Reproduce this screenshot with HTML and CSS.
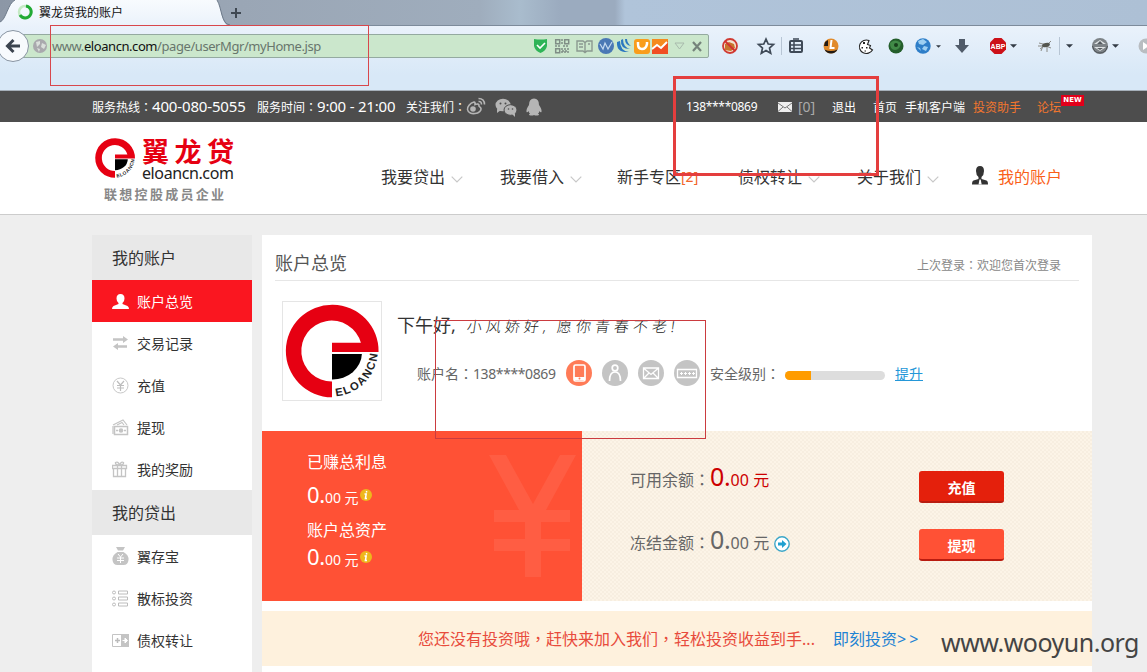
FILE: index.html
```html
<!DOCTYPE html>
<html lang="zh-CN">
<head>
<meta charset="utf-8">
<title>翼龙贷我的账户</title>
<link rel="stylesheet" href="styles.css">
</head>
<body>
<svg class="defs" width="0" height="0">
  <defs>
    <symbol id="logo" viewBox="0 0 100 100">
      <path fill="#e60012" d="M50 97.3A47.3 47.3 0 1 1 97.5 51H50V41.5H79.5A31 31 0 1 0 50 81Z"/>
      <path fill="#000" d="M50 53H80.5A30 27 0 0 1 50 79Z"/>
      <path id="arc" fill="none" d="M50 96.5A46.5 46.5 0 0 0 96.5 50"/>
      <text class="arc-text" textLength="66"><textPath href="#arc" startOffset="4">ELOANCN</textPath></text>
    </symbol>
    <symbol id="envelope" viewBox="0 0 14 10"><path fill="#eee" d="M0 0h14v10H0z"/><path fill="none" stroke="#777" d="M0 1l7 5 7-5M0 9.500l5-4.500M14 9.500L9 5"/></symbol>
    <symbol id="info" viewBox="0 0 12 12"><circle cx="6" cy="6" r="6" fill="#eeb71c"/><path d="M6.700 2l-.3 1.500M4.500 5h1.700l-.8 4.500h1.600" stroke="#fff" stroke-width="1.500" fill="none"/></symbol>
    <symbol id="caret" viewBox="0 0 8 4"><path d="M0 0h8L4 4z" fill="#333b45"/></symbol>
    <symbol id="chev" viewBox="0 0 12 7"><path d="M.7.700L6 6 11.300.700" fill="none" stroke="#c8c8c8" stroke-width="1.200"/></symbol>
  </defs>
</svg>

<div class="browser">
  <div class="tabs">
    <svg class="tab-shape" width="230" height="26"><defs><linearGradient id="tg" x2="0" y2="1"><stop stop-color="#f8fbfe"/><stop offset="1" stop-color="#eaf2fb"/></linearGradient></defs><path d="M0 26V22C6 20 8 3 15 0H217C222 8 221 25 230 26Z" fill="url(#tg)"/><path d="M0 22C6 20 8 3 15 0M217 0C222 8 221 24 230 25" fill="none" stroke="#6d7a8a"/></svg>
    <svg class="spinner" width="16" height="16"><circle cx="8" cy="8" r="6" fill="none" stroke="#c5eac5" stroke-width="2.500"/><path d="M9 2A6 6 0 1 1 3 11" fill="none" stroke="#22aa35" stroke-width="3"/></svg>
    <span class="tab-title">翼龙贷我的账户</span>
    <svg class="plus" width="12" height="12"><path d="M6 1v10M1 6h10" stroke="#3f4852" stroke-width="2"/></svg>
  </div>
  <div class="toolbar">
    <svg class="back" width="32" height="34" viewBox="-3 0 32 34"><circle cx="13" cy="17" r="15.500" fill="#f7fafd" stroke="#8894a2"/><path d="M20 17H9M13.500 11l-6 6 6 6" fill="none" stroke="#3b444f" stroke-width="3"/></svg>
    <div class="url">
      <svg class="globe" width="14" height="14"><circle cx="7" cy="7" r="7" fill="#a9a9ad"/><path d="M3 3l4-1 0 3-3 3zM9 4l4 2-2 4-3-2zM4 9l3 1-1 3z" fill="#dadfdb"/></svg>
      <span class="address">www.<b>eloancn.com</b>/page/userMgr/myHome.jsp</span>
      <svg class="url-icons" width="172" height="18">
        <path d="M1 2Q8 3 14 2V9Q13 14 7.500 16 2 14 1 9Z" fill="#2fb457"/><path d="M4 8l3 3 5-5" fill="none" stroke="#fff" stroke-width="1.600"/>
        <g fill="none" stroke="#7f8d85" stroke-width="1.500"><path d="M22.700 2.700h4v4h-4zM31.700 2.700h4v4h-4zM22.700 11.700h4v4h-4z"/><path d="M29 2v6M22 9h5M30 9h6M29 11v5M32 11v5M35 11v5M29 14h6" stroke-dasharray="2 1"/></g>
        <path d="M44 4h6l2 1.500 2-1.500h5v10h-5l-2 1.500-2-1.500h-6zM52 5v10M46 7h4M46 10h4M55 7h2" fill="none" stroke="#8b9990" stroke-width="1.400"/>
        <circle cx="73" cy="9" r="8" fill="#4a78b5"/><path d="M67 7l3 5 2-6 3 6 4-7" fill="none" stroke="#c5daf0" stroke-width="1.200"/>
        <path d="M84 5q-1 11 12 10-9-1-9-11M88 3q-1 9 9 9-7-2-7-10M92 2q0 6 6 7-4-3-4-7" fill="#2c78c0"/>
        <rect x="101" y="2" width="16" height="15" rx="3" fill="#f99d1c"/><path d="M105 5v2q0 5 4 5t5-5V5" fill="none" stroke="#fff" stroke-width="2.500"/>
        <path d="M119 2h16v15h-16z" fill="#f58a1f"/><path d="M119 12l5-4 4 3 7-7v13h-16z" fill="#f04e23"/><path d="M119 12l5-4 4 3 6-6" fill="none" stroke="#fff" stroke-width="2"/>
        <path d="M142 6h9l-4.500 6z" fill="none" stroke="#a8baac"/>
        <path d="M160 5l8 9M168 5l-8 9" stroke="#75837b" stroke-width="2.200"/>
      </svg>
    </div>
    <svg class="tools" width="431" height="24">
      <g transform="translate(-716 -34)">
        <circle cx="730" cy="46" r="7" fill="#f3e2d2" stroke="#d03a32" stroke-width="1.800"/><path d="M725 44l4-2 5 2 1 4-4 3-6-1z" fill="#c8742c"/><path d="M725 41l10 10" stroke="#d22f2f" stroke-width="1.800"/>
        <path d="M766 39l2.200 5 5.300.5-4 3.600 1.200 5.200-4.700-2.800-4.700 2.800 1.200-5.200-4-3.600 5.300-.5z" fill="none" stroke="#3f4a57" stroke-width="1.700"/>
        <path d="M781.500 37v18" stroke="#b7c5d4"/>
        <rect x="790" y="41" width="12" height="11" rx="1" fill="none" stroke="#3f4a57" stroke-width="2"/><path d="M793 39h6M790 45h12M790 48.500h12M794 42v10" stroke="#3f4a57" stroke-width="1.500"/>
        <circle cx="831" cy="46" r="7.500" fill="#e18b2c"/><path d="M824.500 49.500q6.500 3 13 0-2 4-6.500 4t-6.500-4zM825 42l3-2v6h-4z" fill="#221b15"/><path d="M831.500 40l-1 8h4" fill="none" stroke="#fff" stroke-width="2"/>
        <path d="M869 40.500a7 6.700 0 1 0 3.500 9.500l-3-2 1-2.500-3-1z" fill="#fff" stroke="#222" stroke-width="1.100"/><path d="M863 42h2v2h-2zM866 47h1.500v1.500h-1.500zM861.500 47h1.500v1.500h-1.500zM864.500 50.500h1.500v1h-1.500z" fill="#222"/>
        <circle cx="896" cy="46" r="7.500" fill="#245e2b"/><path d="M890 43q5-5 11 0-1 7-6 7t-5-7z" fill="#418a47"/><circle cx="896" cy="45" r="2" fill="#183f1c"/>
        <circle cx="923" cy="46" r="7.700" fill="#2e7ec8"/><path d="M918 41l5-2 4 3-4 3-4-1zM924 46l4 1-2 4-4-2zM917 47l3 1 1 3z" fill="#9dcff2"/>
        <use href="#caret" x="936" y="45" width="5" height="3"/>
        <path d="M959 39h6v6h4l-7 8-7-8h4z" fill="#505b69"/>
        <path d="M994.500 38h7l4.500 4.500v7l-4.500 4.500h-7l-4.500-4.500v-7z" fill="#cc1018"/><text x="998" y="49" class="abp">ABP</text>
        <use href="#caret" x="1010" y="44" width="7" height="4"/>
        <path d="M1039 43l8 2 4-4M1038 46h8l5 2M1043 46l-2 5M1047 46l0 6M1040 49l4-3" stroke="#8b8b86" fill="none"/><ellipse cx="1046" cy="45" rx="4" ry="2" fill="#55564f" transform="rotate(-15 1046 45)"/>
        <path d="M1059.500 37v18" stroke="#b7c5d4"/><use href="#caret" x="1066" y="44" width="7" height="4"/>
        <circle cx="1100" cy="46" r="8" fill="#7d8387"/><path d="M1094 44l6-4 6 4zM1094 47h12l-6 4z" fill="#dfe3e5"/><path d="M1097 44l3-3 3 3zM1097 48h6l-3 2z" fill="#555b60"/><path d="M1092.500 46q1.500 7 7.500 7t7.500-7" fill="none" stroke="#4c5257"/>
        <use href="#caret" x="1112" y="44" width="7" height="4"/>
        <circle cx="1146" cy="46" r="7.500" fill="#b9bdc1"/><path d="M1143 42v8l6-4z" fill="#fff"/>
      </g>
    </svg>
  </div>
</div>

<div class="topbar">
  <span class="hot">服务热线<i class="fw" lang="zh-TW">：</i></span><span class="hot-no">400-080-5055</span>
  <span class="hours">服务时间<i class="fw" lang="zh-TW">：</i></span><span class="hours-no">9:00 - 21:00</span>
  <span class="follow">关注我们<i class="fw" lang="zh-TW">：</i></span>
  <svg class="social" width="78" height="20">
    <g fill="none" stroke="#b5b5b5" stroke-width="1.600"><path d="M8 5C4 6 1 10 1.500 12.500 2 16 6 17 9 16.500c4-.5 6.500-3 6-5-.4-1.700-2-1.500-2-2.500.3-2-1.500-2.500-4-1.500C9 6 9.200 4.800 8 5z"/><path d="M12.500 4.500q3-.5 3 3M12.500 1.500q6 0 6 6"/></g><circle cx="7" cy="12" r="2.800" fill="#b5b5b5"/>
    <g fill="#b5b5b5"><ellipse cx="37" cy="8" rx="7.500" ry="6.300"/><path d="M31 12l0 4 4-3z"/><ellipse cx="44.500" cy="13" rx="6.500" ry="5.300" stroke="#4d4d4d"/><path d="M46 17l3 3v-4z"/></g><g fill="#4d4d4d"><circle cx="34.500" cy="6.500" r="1"/><circle cx="39.500" cy="6.500" r="1"/><circle cx="42.500" cy="12" r=".8"/><circle cx="46.500" cy="12" r=".8"/></g>
    <path d="M68 1.500q5 0 5 6.500 3 4 2.500 7-1 1-2-1-.5 2-1.500 2.500 1.500 1 1 1.500-3 1-5 0-2 1-5 0-.5-.5 1-1.500-1-.5-1.500-2.500-1 2-2 1Q60 12 63 8q0-6.500 5-6.500z" fill="#b5b5b5"/>
  </svg>
  <span class="phone">138****0869</span>
  <svg class="mail" width="14" height="10"><use href="#envelope"/></svg>
  <span class="count">[0]</span>
  <span class="logout">退出</span><span class="home">首页</span><span class="mobile">手机客户端</span>
  <span class="helper">投资助手</span><span class="forum">论坛<b class="new">NEW</b></span>
</div>

<header class="header">
  <div class="brand">
    <div class="brand-row"><svg width="42" height="42"><use href="#logo"/></svg>
      <div class="brand-words"><b>翼龙贷</b><span>eloancn.com</span></div></div>
    <div class="slogan">联想控股成员企业</div>
  </div>
  <nav class="nav">
    <span class="n1">我要贷出<svg width="12" height="7"><use href="#chev"/></svg></span>
    <span class="n2">我要借入<svg width="12" height="7"><use href="#chev"/></svg></span>
    <span class="n3">新手专区<em>[2]</em></span>
    <span class="n4">债权转让<svg width="12" height="7"><use href="#chev"/></svg></span>
    <span class="n5">关于我们<svg width="12" height="7"><use href="#chev"/></svg></span>
    <span class="n6"><svg class="user" width="16" height="19"><path d="M8 0q4 0 4 5 0 4-2.500 6v2l5 1.500q1.500.5 1.500 4H0q0-3.500 1.500-4l5-1.500v-2Q4 9 4 5q0-5 4-5z" fill="#333"/><path d="M7.500 13.500h1.200l1 5H6.500z" fill="#fff"/></svg>我的账户</span>
  </nav>
</header>

<div class="page">
  <aside class="side">
    <h3>我的账户</h3>
    <a class="on"><svg width="17" height="17"><path d="M8.500 1q4 0 4 4.500 0 3-2 4.500v1l5 2q1.500 1 1.500 3H0q0-2 1.500-3l5-2v-1q-2-1.500-2-4.500 0-4.500 4-4.500z" fill="#fff"/></svg><span>账户总览</span></a>
    <a><svg width="17" height="17"><path d="M1 4.500h10M6 11.500h9" stroke="#c4c4c4" stroke-width="2.600"/><path d="M11 1l5 3.500-5 3.500zM6 8l-5 3.500L6 15z" fill="#c4c4c4"/></svg><span>交易记录</span></a>
    <a><svg width="17" height="17"><circle cx="8.500" cy="8.500" r="7.500" fill="none" stroke="#c8c8c8"/><path d="M5 4l3.500 4L12 4M8.500 8v6M5 8.500h7M5 11h7" fill="none" stroke="#bdbdbd" stroke-width="1.200"/></svg><span>充值</span></a>
    <a><svg width="17" height="17"><path d="M2.500 7.500h13v8h-13z" fill="none" stroke="#c4c4c4" stroke-width="1.500"/><path d="M1 6l10-5 4 5M5 6l5-2.500L12 6M1 7v8" fill="none" stroke="#c4c4c4" stroke-width="1.200"/><circle cx="9" cy="11.500" r="2.300" fill="#c4c4c4"/><path d="M4 11.500h2M12 11.500h2" stroke="#c4c4c4" stroke-width="1.500"/></svg><span>提现</span></a>
    <a><svg width="17" height="17"><path d="M1.500 7.500h12v8h-12zM.5 4.500h14v3H.5zM5.500 4.500v11M9.500 4.500v11M7.500 4Q3 4 3.500 1.500 6 0 7.500 4q2-4 4-2.500Q12 4 7.500 4" fill="none" stroke="#c4c4c4" stroke-width="1.300"/></svg><span>我的奖励</span></a>
    <h3>我的贷出</h3>
    <a><svg width="17" height="20" viewBox="0 0 17 20"><path d="M4 1h9l-2 3.500H6zM5.500 6h6Q17 9 16.500 14q-.5 5-5 5h-6q-4.500 0-5-5Q0 9 5.500 6z" fill="#c4c4c4"/><path d="M6 8l2.500 3L11 8M8.500 11v6M5 12h7M5 14.500h7" fill="none" stroke="#fff"/></svg><span>翼存宝</span></a>
    <a><svg width="17" height="17"><g fill="none" stroke="#bcbcbc"><circle cx="2" cy="2.500" r="1.500"/><circle cx="2" cy="8.500" r="1.500"/><circle cx="2" cy="14.500" r="1.500"/><path d="M6.500 1h9v3h-9zM6.500 7h9v3h-9zM6.500 13h9v3h-9z"/></g></svg><span>散标投资</span></a>
    <a><svg width="17" height="17"><path d="M.5 2.500h9v12h-9z" fill="#fff" stroke="#c4c4c4"/><path d="M9 2h8v13H9z" fill="#c4c4c4"/><path d="M3 8.500h5M5.500 6v5" stroke="#bbb" stroke-width="1.500"/><path d="M10.500 8.500h3M13 6l2.500 2.500L13 11z" stroke="#fff" fill="#fff"/></svg><span>债权转让</span></a>
  </aside>

  <main class="main">
    <div class="title"><h2>账户总览</h2><span>上次登录<i class="fw" lang="zh-TW">：</i>欢迎您首次登录</span></div>
    <section class="profile">
      <div class="avatar"><svg width="98" height="98"><use href="#logo"/></svg></div>
      <div class="info">
        <div class="greet">下午好, <i>小风娇好<b>,</b>愿你青春不老!</i></div>
        <div class="account">
          <span class="acc-label">账户名<i class="fw" lang="zh-TW">：</i></span><span class="acc-no">138****0869</span>
          <svg class="badges" width="134" height="26">
            <circle cx="13" cy="13" r="13" fill="#ff7b57"/><g fill="#c4c4c4"><circle cx="49" cy="13" r="13"/><circle cx="85" cy="13" r="13"/><circle cx="121" cy="13" r="13"/></g>
            <g fill="none" stroke="#fff" stroke-width="1.700"><rect x="8" y="5" width="11" height="16" rx="1.500"/><path d="M8 18.500h11" stroke-width="3"/><circle cx="49" cy="8" r="2.800"/><path d="M43.500 21q0-9 5.500-9t5.500 9"/><path d="M77.500 8h15v10.500h-15zM78 8.500l7 6 7-6M78 18l5-5M92 18l-5-5" stroke-width="1.300"/><path d="M111.500 9.500h19v8h-19z" stroke-width="1.300"/></g>
            <path d="M114 13.500h3M118 13.500h3M122 13.500h3M126 13.500h3M115.500 12v3M119.500 12v3M123.500 12v3M127.500 12v3" stroke="#fff"/><circle cx="13.500" cy="18.500" r="1" fill="#ff7b57"/>
          </svg>
          <span class="level">安全级别<i class="fw" lang="zh-TW">：</i></span><span class="meter"><span></span></span><a class="up">提升</a>
        </div>
      </div>
    </section>
    <section class="funds">
      <div class="earned">
        <svg class="yen" width="90" height="124"><path d="M1 0H18L45 49 72 0H88L58 55H82V67H53V84H82V96H53V122H37V96H6V84H37V67H6V55H31Z" fill="#ff5d43"/></svg>
        <p>已赚总利息</p>
        <div class="money"><b>0.</b><span>00 元</span><svg width="12" height="12"><use href="#info"/></svg></div>
        <p>账户总资产</p>
        <div class="money total"><b>0.</b><span>00 元</span><svg width="12" height="12"><use href="#info"/></svg></div>
      </div>
      <div class="balance">
        <div class="amounts">
          <div class="amount red"><label>可用余额<i class="fw" lang="zh-TW">：</i></label><b>0.</b><span>00 元</span></div>
          <div class="amount"><label>冻结金额<i class="fw" lang="zh-TW">：</i></label><b>0.</b><span>00 元</span><svg width="16" height="16"><circle cx="8" cy="8" r="7.200" fill="#fff" stroke="#3ba6c8" stroke-width="1.400"/><path d="M4 6.500h4V4l4.500 4L8 12V9.500H4z" fill="#1fa0d0"/></svg></div>
        </div>
        <div class="buttons"><a class="recharge">充值</a><a class="withdraw">提现</a></div>
      </div>
    </section>
    <section class="tip"><span class="tip-text">您还没有投资哦<i class="fw" lang="zh-TW">，</i>赶快来加入我们<i class="fw" lang="zh-TW">，</i>轻松投资收益到手...</span><a>即刻投资<i>&gt;&gt;</i></a></section>
  </main>
</div>

<div class="mark mark-url"></div><div class="mark mark-login"></div><div class="mark mark-account"></div>
<div class="watermark">www.wooyun.org</div>
</body>
</html>
```
FILE: styles.css
```css
* { box-sizing: border-box; }
body { margin: 0; position: relative; width: 1147px; height: 672px; overflow: hidden; background: #eee; color: #333; font-family: "Noto Sans", "Noto Sans CJK SC", sans-serif; white-space: nowrap; }
svg { display: block; flex: none; }
i, em { font-style: normal; }
h2, h3, p { margin: 0; font-weight: 400; }
.defs { position: absolute; }
.fw { font-family: "Noto Sans CJK TC", sans-serif; line-height: 1; }
.arc-text { font: bold 11.500px "Liberation Sans", sans-serif; fill: #222; }

.browser { height: 91px; border-bottom: 1px solid #a6b0ba; background: linear-gradient(#eaf2fb 25px, #d8e8f7 75px); }
.tabs { position: relative; display: flex; align-items: center; height: 26px; padding-left: 17px; border-bottom: 1px solid #7d8b9b; background: linear-gradient(90deg, #8c97a6 0, #9aa6b5 240px, #9fadbd 480px, #a9bccd 520px, #9babbf 560px, #9babbf 615px, #b0c4da 625px, #adc0d5 100%); }
.tab-shape { position: absolute; left: 0; top: 0; }
.spinner, .tab-title { position: relative; top: -1px; }
.tab-title { margin-left: 6px; width: 84px; font-size: 12px; color: #111; }
.plus { margin-left: 107px; }
.toolbar { display: flex; align-items: flex-start; padding-top: 3px; }
.back { margin: 0 -9px 0 -3px; z-index: 1; }
.url { display: flex; align-items: center; width: 689px; height: 24px; margin-top: 5px; padding-left: 12px; border: 1px solid #94aaa0; border-radius: 2px; background: #cbe7cc; }
.address { margin-left: 5px; width: 481px; font-size: 13px; letter-spacing: -.43px; color: #68766c; }
.address b { font-weight: 400; color: #111; }
.tools { margin: 5px 0 0 7px; }
.abp { font: bold 7px "Liberation Sans", sans-serif; fill: #fff; text-anchor: middle; }

.topbar { display: flex; align-items: center; height: 31px; padding-left: 92px; background: #4d4d4d; color: #fff; font-size: 12px; }
.hot, .hours, .follow { width: 60px; }
.hot-no { width: 105px; font-size: 15px; letter-spacing: -.15px; }
.hours-no { width: 89px; font-size: 15px; letter-spacing: -.2px; }
.hot-no, .hours-no { padding-bottom: 2px; }
.social { width: 78px; }
.phone { width: 92px; margin-left: 142px; letter-spacing: -.3px; }
.count { margin-left: 6px; width: 34px; font-size: 14px; color: #aaa; }
.logout { width: 41px; }
.home { width: 32px; }
.mobile { width: 68px; }
.helper, .forum { color: #f2762e; }
.helper { width: 64px; }
.forum { position: relative; }
.new { position: absolute; left: 24px; top: -3px; width: 23px; height: 11px; background: #e2001a; color: #fff; font: bold 7px/11px "DejaVu Sans", sans-serif; text-align: center; }

.header { display: flex; height: 93px; background: #fff; border-bottom: 1px solid #ccc; }
.brand { width: 289px; padding: 15px 0 0 94px; }
.brand-row { display: flex; height: 46px; }
.brand-words { display: flex; flex-direction: column; margin-left: 6px; }
.brand-words b { color: #e60012; font-size: 27px; line-height: 29px; letter-spacing: 5.500px; font-weight: 700; }
.brand-words span { color: #222; font-size: 16px; line-height: 14px; letter-spacing: -.4px; }
.slogan { margin-left: 10px; font-size: 13px; line-height: 22px; font-weight: 700; letter-spacing: 2.300px; color: #888; }
.nav { display: flex; align-items: flex-start; margin-left: 92px; padding-top: 43px; font-size: 16px; line-height: 24px; }
.nav span { display: flex; align-items: center; height: 24px; }
.nav svg { margin: 5px 0 0 6px; }
.nav em { color: #f2642a; font-size: 14px; }
.n1 { width: 119px; } .n2 { width: 117px; } .n3 { width: 121px; } .n4 { width: 119px; } .n5 { width: 115px; }
.n6 { color: #fa5f19; }
.nav .user { margin: -4px 10px 0 0; }

.page { display: flex; align-items: flex-start; gap: 10px; padding: 20px 0 0 92px; }
.side { width: 160px; height: 440px; background: #fff; }
.side h3 { height: 45px; padding-left: 20px; background: #e8e8e8; font-size: 16px; line-height: 47px; }
.side a { display: flex; align-items: center; gap: 8px; height: 42px; padding-left: 20px; font-size: 14px; }
.side a.on { background: #fa1620; color: #fff; }

.main { width: 830px; height: 440px; background: #fff; }
.title { display: flex; justify-content: space-between; height: 46px; margin: 0 13px; padding-right: 18px; border-bottom: 1px solid #e6e6e6; }
.title h2 { font-size: 18px; line-height: 57px; color: #555; }
.title span { font-size: 12px; line-height: 61px; color: #888; }
.profile { display: flex; height: 150px; padding: 20px 0 0 20px; }
.avatar { width: 100px; height: 100px; border: 1px solid #e5e5e5; }
.info { margin-left: 15px; padding-top: 11px; }
.greet { height: 26px; font-size: 18px; line-height: 26px; }
.greet i { display: inline-block; margin-left: 6px; font-size: 15px; font-weight: 300; letter-spacing: 4px; transform: skewX(-8deg); color: #222; }
.greet b { display: inline-block; width: 14px; font-weight: 300; }
.account { display: flex; align-items: center; height: 26px; margin-top: 22px; padding-left: 20px; font-size: 14px; color: #666; }
.acc-label { width: 56px; }
.acc-no { width: 93px; letter-spacing: -.4px; }
.level { width: 75px; margin-left: 10px; }
.meter { width: 100px; height: 9px; margin-top: 4px; border-radius: 5px; overflow: hidden; background: #ddd; }
.meter span { display: block; width: 26px; height: 9px; background: #ff9c00; }
.up { margin-left: 10px; color: #2497d8; text-decoration: underline; }

.funds { display: flex; height: 170px; }
.earned { position: relative; width: 320px; padding: 20px 0 0 45px; background: #ff5135; color: #fff; }
.yen { position: absolute; left: 226px; top: 24px; }
.earned p { font-size: 16px; line-height: 23px; }
.money { position: relative; display: flex; align-items: baseline; height: 45px; line-height: 40px; }
.money b { font-size: 22px; font-weight: 400; letter-spacing: -.3px; }
.money span { font-size: 14px; width: 35px; }
.money svg { align-self: flex-start; margin-top: 15px; }
.total { line-height: 28px; }
.total svg { margin-top: 9px; }
.balance { display: flex; width: 510px; background: repeating-conic-gradient(#fcf4e7 0 25%, #f7eee0 0 50%) 0 0 / 4px 4px; }
.amounts { width: 289px; margin-left: 48px; padding-top: 14px; }
.amount { display: flex; align-items: baseline; height: 63px; line-height: 63px; color: #666; }
.amount label { width: 80px; font-size: 16px; }
.amount b { font-size: 25px; font-weight: 400; letter-spacing: -.3px; }
.amount span { width: 44px; font-size: 16px; letter-spacing: .1px; }
.amount svg { align-self: flex-start; margin-top: 28px; }
.amount.red b, .amount.red span { color: #c00; }
.buttons { display: flex; flex-direction: column; gap: 26px; padding-top: 40px; }
.buttons a { width: 85px; height: 32px; border-radius: 3px; border-bottom: 2px solid #b91c10; color: #fff; font-size: 14px; font-weight: 700; line-height: 33px; text-align: center; }
.recharge { background: #e4200c; }
.withdraw { background: #ff5135; }
.tip { display: flex; height: 55px; margin-top: 10px; padding-left: 156px; background: #fef1dd; font-size: 16px; line-height: 56px; color: #e84b3c; }
.tip-text { width: 415px; }
.tip a { color: #1e83d3; }
.tip a i { letter-spacing: 3px; }

.mark { position: absolute; }
.mark-url { left: 50px; top: 25px; width: 319px; height: 61px; border: 1px solid #d8474c; }
.mark-login { left: 673px; top: 76px; width: 206px; height: 100px; border: 3px solid #e43e3e; }
.mark-account { left: 435px; top: 320px; width: 271px; height: 119px; border: 1px solid #cb3b3f; }
.watermark { position: absolute; left: 941px; top: 624px; font-size: 25px; line-height: 36px; letter-spacing: -.5px; color: #444; }
```
